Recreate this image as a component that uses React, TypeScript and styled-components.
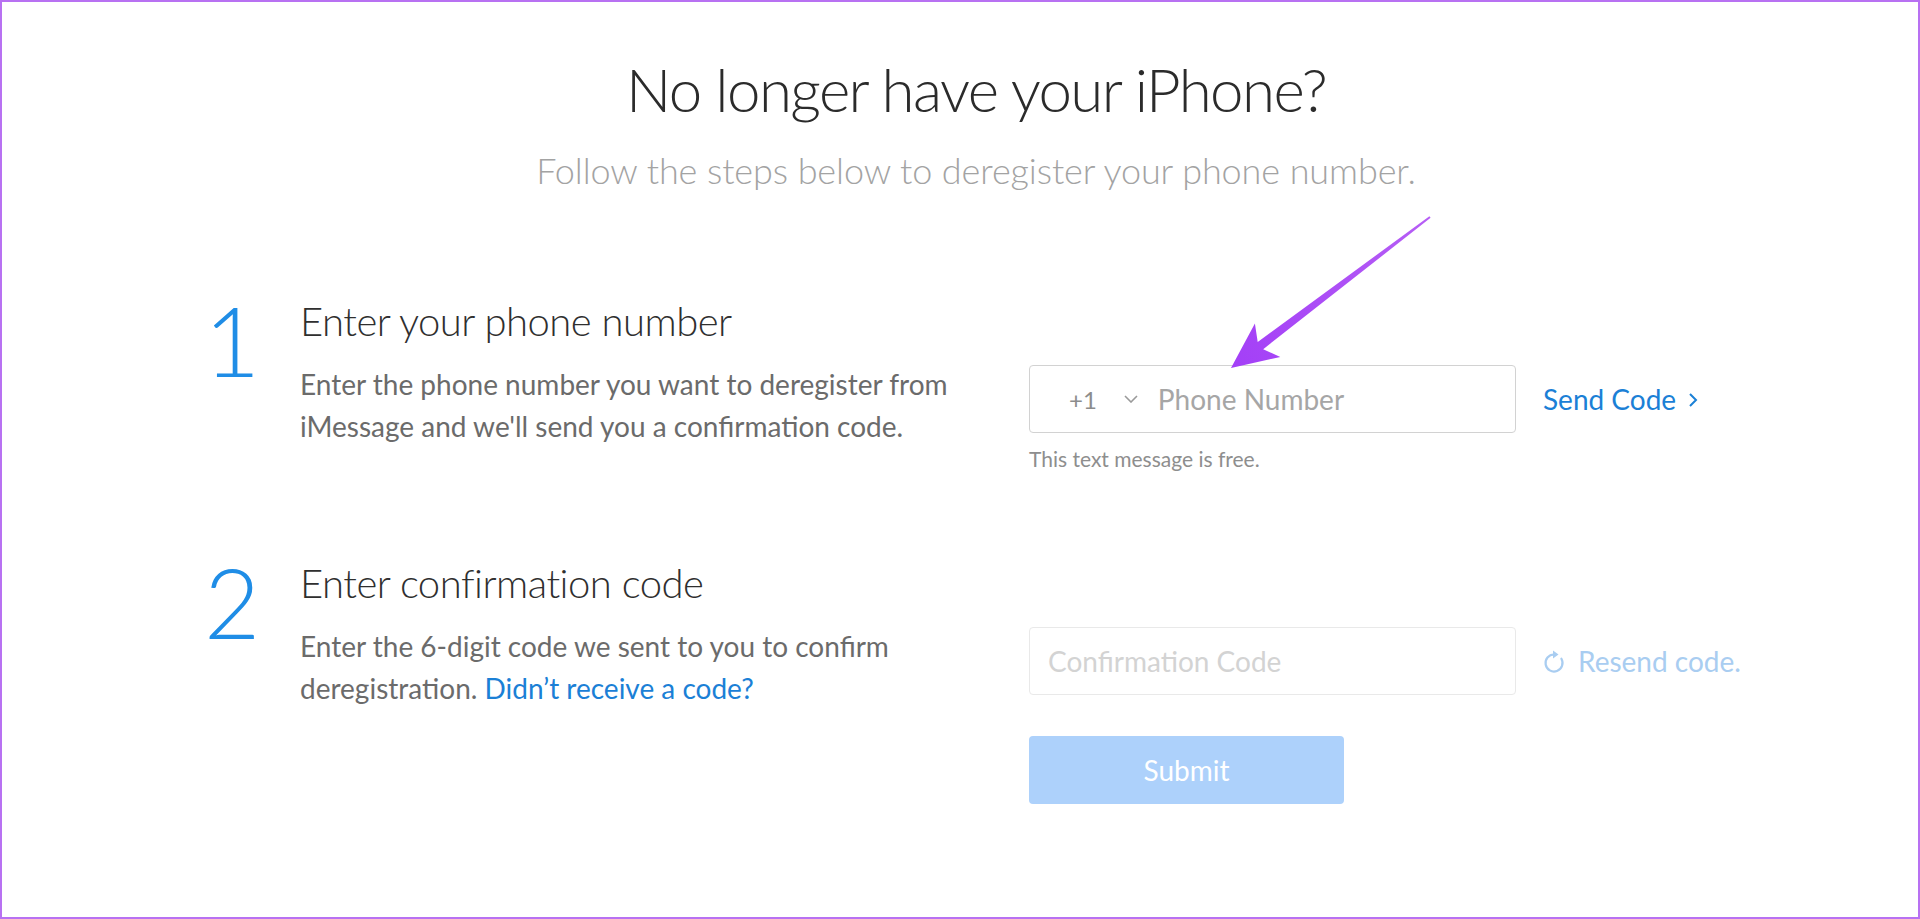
import React from "react";
import styled, { createGlobalStyle } from "styled-components";

const GlobalStyle = createGlobalStyle`
  html, body {
    margin: 0;
    padding: 0;
    background: #ffffff;
  }
  body {
    font-family: "Lato", "Open Sans", "Liberation Sans", sans-serif;
    -webkit-font-smoothing: antialiased;
  }
  * { box-sizing: border-box; }
`;

const Page = styled.main`
  position: relative;
  width: 1920px;
  height: 919px;
  border: 2px solid #b871f2;
  overflow: hidden;
  background: #ffffff;
`;

const Header = styled.header`
  padding-top: 57px;
  padding-left: 32px;
  text-align: center;
`;

const Title = styled.h1`
  margin: 0;
  font-size: 60px;
  line-height: 1;
  font-weight: 300;
  letter-spacing: -1.6px;
  color: #2b2b2b;
`;

const Subtitle = styled.p`
  margin: 33px 0 0;
  font-size: 36px;
  line-height: 1;
  font-weight: 300;
  letter-spacing: -0.1px;
  color: #a3a3a3;
`;

const Steps = styled.section`
  padding-left: 212px;
  margin-top: 113px;
  display: flex;
  flex-direction: column;
`;

const Step = styled.div<{ $gap?: number }>`
  display: grid;
  grid-template-columns: 86px 729px 1fr;
  align-items: start;
  margin-top: ${(p) => p.$gap ?? 0}px;
`;

const Number = styled.div`
  margin-left: -10px;
  font-size: 97px;
  line-height: 0.8;
  font-weight: 300;
  color: #1f8de6;
`;

const TextCol = styled.div`
  display: flex;
  flex-direction: column;
`;

const Heading = styled.h2`
  margin: 0;
  font-size: 40px;
  line-height: 1;
  font-weight: 300;
  letter-spacing: -0.5px;
  color: #2f2f2f;
`;

const Desc = styled.p`
  margin: 22px 0 0;
  font-size: 28px;
  line-height: 42px;
  font-weight: 400;
  color: #6b6b6b;
`;

const Link = styled.a<{ $muted?: boolean }>`
  color: ${(p) => (p.$muted ? "#a9cdf1" : "#1b80d6")};
  text-decoration: none;
  cursor: pointer;
`;

const FormCol = styled.div`
  margin-top: 64px;
  display: grid;
  grid-template-columns: 487px auto;
  column-gap: 27px;
  align-items: center;
  justify-content: start;
`;

const Field = styled.div<{ $light?: boolean }>`
  height: 68px;
  border: 1px solid ${(p) => (p.$light ? "#e9e9e9" : "#d2d2d2")};
  border-radius: 4px;
  display: flex;
  align-items: center;
  background: #fff;
`;

const Country = styled.div`
  display: flex;
  align-items: center;
  padding-left: 39px;
  font-size: 24px;
  color: #8c8c8c;
`;

const Chevron = styled.svg`
  margin-left: 27px;
  margin-right: 20px;
  display: block;
`;

const TextInput = styled.input<{ $light?: boolean }>`
  flex: 1;
  min-width: 0;
  border: none;
  outline: none;
  background: transparent;
  font-family: "Lato", "Open Sans", "Liberation Sans", sans-serif;
  font-size: 28px;
  padding: 0 0 0 ${(p) => (p.$light ? "18px" : "0")};
  color: #333;
  &::placeholder {
    color: ${(p) => (p.$light ? "#d3d3d3" : "#a6a6a6")};
  }
`;

const Action = styled.div`
  display: flex;
  align-items: center;
  gap: 13px;
  font-size: 28px;
  white-space: nowrap;
`;

const LinkChevron = styled.svg`
  display: block;
  margin-left: -1px;
  margin-top: 2px;
`;

const Helper = styled.div`
  grid-column: 1 / 2;
  margin-top: 13px;
  font-size: 21px;
  line-height: 1.2;
  color: #8e8e8e;
`;

const SubmitButton = styled.button`
  grid-column: 1 / 2;
  margin-top: 41px;
  width: 315px;
  height: 68px;
  border: none;
  border-radius: 4px;
  background: #add1fb;
  color: #ffffff;
  font-family: "Lato", "Open Sans", "Liberation Sans", sans-serif;
  font-size: 28px;
  cursor: default;
`;

const Overlay = styled.svg`
  position: absolute;
  top: -2px;
  left: -2px;
  pointer-events: none;
`;

function pt(s: number, t: number): string {
  const tail = [1430, 217];
  const u = [-0.796, 0.604];
  const n = [0.604, 0.796];
  const x = tail[0] + s * u[0] + t * n[0];
  const y = tail[1] + s * u[1] + t * n[1];
  return `${x.toFixed(1)},${y.toFixed(1)}`;
}

const arrowPoints = [
  pt(250, 0),
  pt(204, 21),
  pt(213, 4.5),
  pt(0, 1),
  pt(0, -1),
  pt(213, -4.5),
  pt(204, -21),
].join(" ");

export default function App() {
  return (
    <>
      <GlobalStyle />
      <Page>
        <Header>
          <Title>No longer have your iPhone?</Title>
          <Subtitle>Follow the steps below to deregister your phone number.</Subtitle>
        </Header>

        <Steps>
          <Step>
            <Number>1</Number>
            <TextCol>
              <Heading>Enter your phone number</Heading>
              <Desc>
                Enter the phone number you want to deregister from
                <br />
                iMessage and we'll send you a confirmation code.
              </Desc>
            </TextCol>
            <FormCol>
              <Field>
                <Country>
                  <span>+1</span>
                  <Chevron width="14" height="8" viewBox="0 0 14 8">
                    <polyline points="1,1 7,7 13,1" fill="none" stroke="#9a9a9a" strokeWidth="1.6" />
                  </Chevron>
                </Country>
                <TextInput placeholder="Phone Number" />
              </Field>
              <Action>
                <Link>Send Code</Link>
                <LinkChevron width="10" height="16" viewBox="0 0 10 16">
                  <polyline points="2,2 8,8 2,14" fill="none" stroke="#1b80d6" strokeWidth="2" />
                </LinkChevron>
              </Action>
              <Helper>This text message is free.</Helper>
            </FormCol>
          </Step>

          <Step $gap={92}>
            <Number>2</Number>
            <TextCol>
              <Heading>Enter confirmation code</Heading>
              <Desc>
                Enter the 6-digit code we sent to you to confirm
                <br />
                deregistration. <Link>Didn’t receive a code?</Link>
              </Desc>
            </TextCol>
            <FormCol>
              <Field $light>
                <TextInput $light placeholder="Confirmation Code" />
              </Field>
              <Action>
                <svg width="22" height="26" viewBox="0 0 22 26">
                  <path
                    d="M11 6.5 A8.5 8.5 0 1 0 18.4 10.75"
                    fill="none"
                    stroke="#a9cdf1"
                    strokeWidth="2.2"
                    strokeLinecap="round"
                  />
                  <polygon points="10,2.5 15.5,6.5 10,10.5" fill="#a9cdf1" />
                </svg>
                <Link $muted>Resend code.</Link>
              </Action>
              <SubmitButton>Submit</SubmitButton>
            </FormCol>
          </Step>
        </Steps>

        <Overlay width="1920" height="919" viewBox="0 0 1920 919">
          <defs>
            <linearGradient id="arrowGrad" x1="1430" y1="217" x2="1231" y2="368" gradientUnits="userSpaceOnUse">
              <stop offset="0" stopColor="#b65ef5" />
              <stop offset="1" stopColor="#a33ff7" />
            </linearGradient>
          </defs>
          <polygon points={arrowPoints} fill="url(#arrowGrad)" />
        </Overlay>
      </Page>
    </>
  );
}
